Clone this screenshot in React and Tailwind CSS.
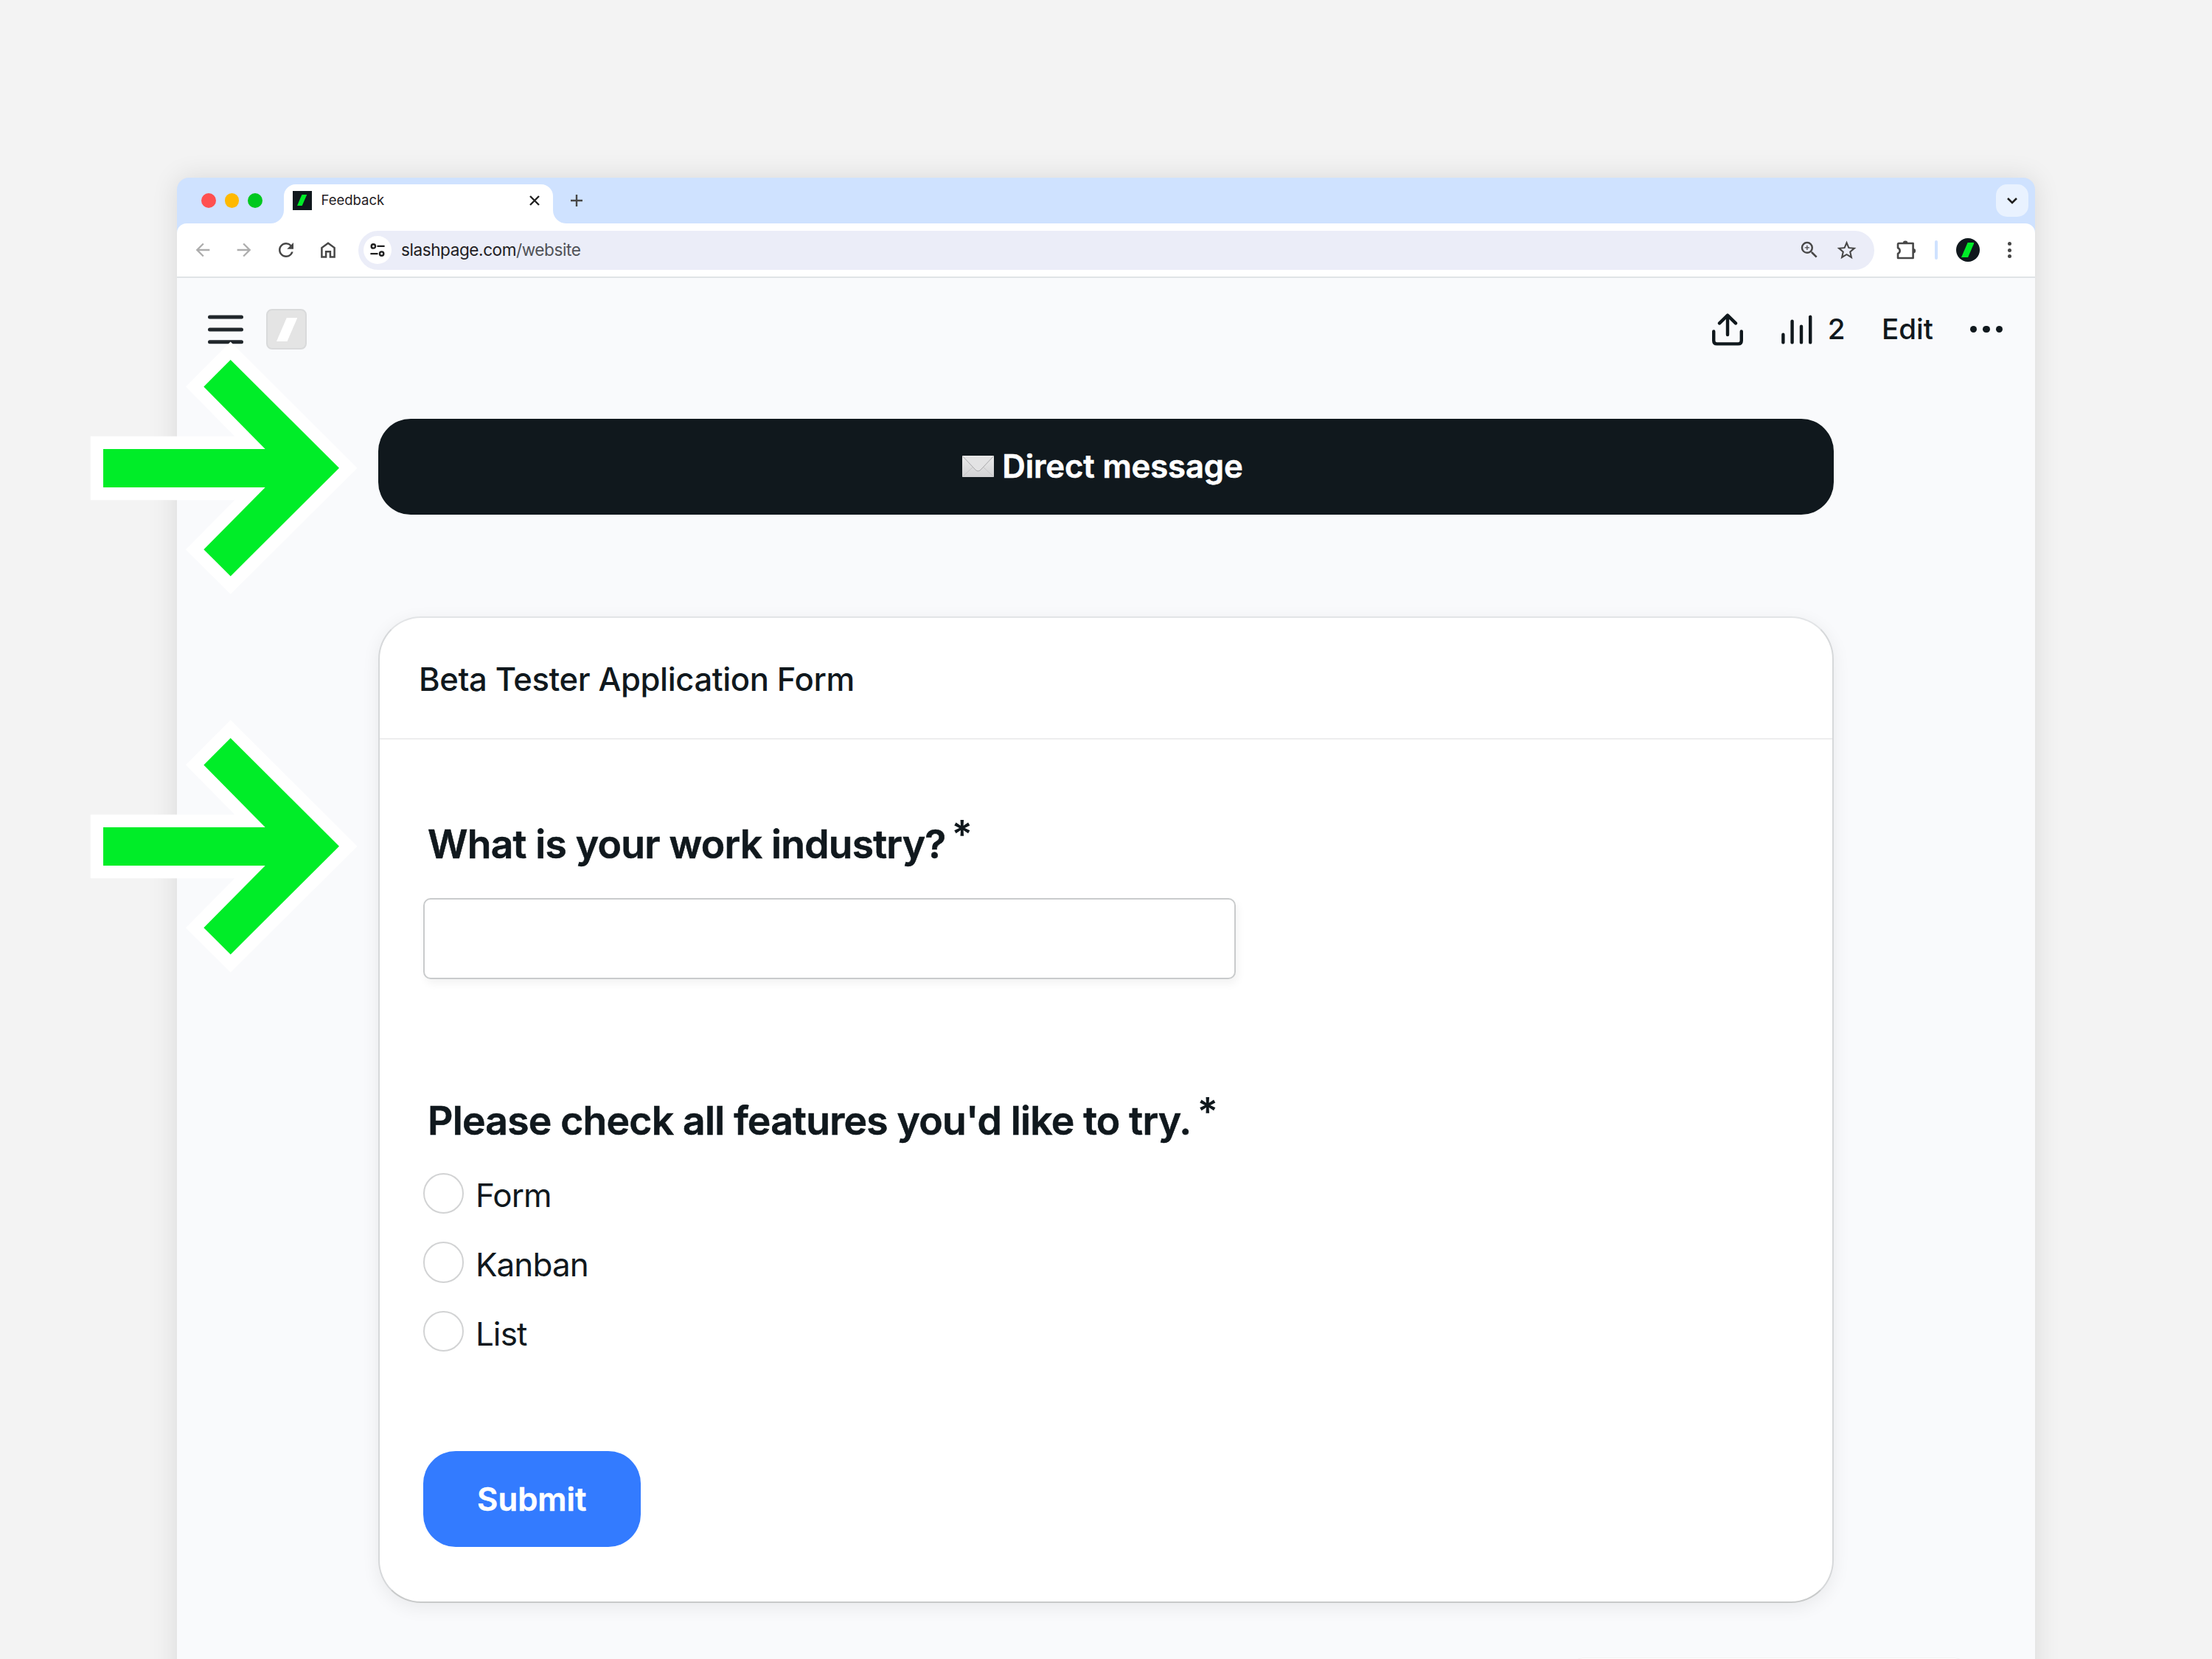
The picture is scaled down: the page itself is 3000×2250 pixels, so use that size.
import { MdArrowBack, MdArrowForward, MdRefresh, MdStarBorder, MdZoomIn } from "react-icons/md";

function Arrow({ className }) {
  return (
    <svg className={className} width="370" height="370" viewBox="115 450 370 370" fill="none">
      <path
        d="M140 609H359.7L276.3 524.4L312.7 488L460 634.8L312.7 781.4L276.3 745.2L359.7 661H140Z"
        fill="#00ed28"
        stroke="#fff"
        strokeWidth="34.6"
        strokeMiterlimit="10"
        paintOrder="stroke"
      />
    </svg>
  );
}

function Slash({ className, color }) {
  return (
    <svg className={className} viewBox="0 0 28 32">
      <path d="M13.8 0H28.3L14.5 32H0Z" fill={color} />
    </svg>
  );
}

function Tab() {
  return (
    <div className="flex h-[53.5px] items-end">
      <svg className="size-[18px]" viewBox="0 0 18 18">
        <path d="M18 0V18H0A18 18 0 0 0 18 0Z" fill="#fff" />
      </svg>
      <div className="flex h-full w-[365.5px] items-start rounded-t-[16px] bg-white pt-[8px] pr-[17px] pl-[12px]">
        <div className="flex h-[28px] w-full items-center">
          <div className="flex size-[26px] items-center justify-center bg-[#10181d]">
            <Slash className="h-[15px] w-[13px]" color="#00ed28" />
          </div>
          <span className="ml-[13px] text-[18.5px] leading-none text-[#1f2023]">Feedback</span>
          <svg className="ml-auto size-[16px]" viewBox="0 0 16 16" stroke="#222" strokeWidth="2.4">
            <path d="M2 2L14 14M14 2L2 14" />
          </svg>
        </div>
      </div>
      <svg className="size-[18px]" viewBox="0 0 18 18">
        <path d="M0 0V18H18A18 18 0 0 1 0 0Z" fill="#fff" />
      </svg>
    </div>
  );
}

function TabStrip() {
  return (
    <div className="flex h-[62px] items-end">
      <div className="flex h-[62px] items-center gap-[12px] pl-[33px]">
        <span className="size-[19.5px] rounded-full bg-[#ff5050]" />
        <span className="size-[19.5px] rounded-full bg-[#ffb900]" />
        <span className="size-[19.5px] rounded-full bg-[#00c81e]" />
      </div>
      <div className="ml-[11px]">
        <Tab />
      </div>
      <svg className="mb-[22.5px] ml-[5px] size-[18px]" viewBox="0 0 18 18" stroke="#474747" strokeWidth="2.4">
        <path d="M9 1V17M1 9H17" />
      </svg>
      <div className="mr-[9px] mb-[9.5px] ml-auto flex size-[44px] items-center justify-center rounded-[15px] bg-[#e9f2ff]">
        <svg className="size-[16px]" viewBox="0 0 16 16" fill="none" stroke="#1f1f1f" strokeWidth="2.6">
          <path d="M2 5L8 11L14 5" />
        </svg>
      </div>
    </div>
  );
}

function Toolbar() {
  return (
    <div className="flex h-[74px] items-center rounded-t-[13px] border-b-2 border-[#e0e3e6] bg-white pr-[32px] pl-[21px] text-[#474747]">
      <MdArrowBack className="size-[28px] text-[#adadad]" />
      <MdArrowForward className="ml-[28px] size-[28px] text-[#adadad]" />
      <MdRefresh className="ml-[28px] size-[30px]" />
      <svg className="ml-[31px] size-[22px]" viewBox="0 0 22 22" fill="none" stroke="currentColor" strokeWidth="2.5">
        <path d="M2.4 20.6V8.1L11 1.7L19.6 8.1V20.6H13.9V13.2H8.1V20.6Z" />
      </svg>
      <div className="ml-[30px] flex h-[53px] w-[2056px] items-center rounded-full bg-[#ebedf8] pr-[22px] pl-[7px]">
        <div className="flex size-[38px] items-center justify-center rounded-full bg-white">
          <svg className="size-[20px]" viewBox="0 0 20 20" fill="none" stroke="#1f1f1f" strokeWidth="2.4">
            <circle cx="4.4" cy="4.9" r="2.7" />
            <path d="M9.5 4.9H19.6M0.4 15.1H10.5" />
            <circle cx="15.6" cy="15.1" r="2.7" />
          </svg>
        </div>
        <span className="ml-[13px] text-[22.6px] leading-none tracking-[-0.45px] text-[#1f2023]">
          slashpage.com<span className="text-[#505257]">/website</span>
        </span>
        <MdZoomIn className="ml-auto size-[30px]" />
        <MdStarBorder className="ml-[20px] size-[31px]" />
      </div>
      <svg className="ml-[29.5px] size-[27px]" viewBox="0 0 27 27">
        <path
          d="M3.2 4H22.6V24H2V18A4.2 4.2 0 0 0 2 10.2V5.2Q2 4 3.2 4Z"
          fill="none"
          stroke="currentColor"
          strokeWidth="2.6"
          strokeLinejoin="round"
        />
        <path d="M8.8 3.8A3.3 3.3 0 0 1 15.4 3.8ZM22.8 11A3.3 3.3 0 0 1 22.8 17.6Z" fill="currentColor" />
      </svg>
      <span className="ml-[25.5px] h-[26px] w-[3.5px] rounded-full bg-[#cfe2ff]" />
      <div className="ml-[25px] flex size-[32px] items-center justify-center rounded-full bg-[#10181d]">
        <Slash className="h-[20px] w-[17.5px]" color="#00ed28" />
      </div>
      <div className="ml-auto flex flex-col gap-[3.7px]">
        <span className="size-[5px] rounded-full bg-current" />
        <span className="size-[5px] rounded-full bg-current" />
        <span className="size-[5px] rounded-full bg-current" />
      </div>
    </div>
  );
}

function PageHeader() {
  return (
    <div className="flex h-[139px] items-center pr-[44px] pl-[42px] text-[#10181d]">
      <svg className="h-[40px] w-[48px]" viewBox="0 0 48 40" stroke="#20262b" strokeWidth="5" strokeLinecap="round">
        <path d="M2.5 3H45.5M2.5 19.9H45.5M2.5 36.8H45.5" />
      </svg>
      <div className="ml-[31px] flex size-[55px] items-center justify-center rounded-[8px] border-2 border-[#d9dadb] bg-[#e4e4e4]">
        <Slash className="h-[32px] w-[28px]" color="#fff" />
      </div>
      <svg
        className="ml-auto h-[44px] w-[42px]"
        viewBox="0 0 42 44"
        fill="none"
        stroke="currentColor"
        strokeWidth="4.4"
        strokeLinecap="round"
        strokeLinejoin="round"
      >
        <path d="M2.2 24.5V37Q2.2 41.4 6.6 41.4H35.4Q39.8 41.4 39.8 37V24.5M21 29V2.6M10 13.4L21 2.6L32 13.4" />
      </svg>
      <svg className="ml-[52px] h-[40px] w-[42px]" viewBox="0 0 42 40" stroke="currentColor" strokeWidth="4.4" strokeLinecap="round">
        <path d="M2.4 26.8V37.4M14.6 8.6V37.4M27 15.6V37.4M39.2 2.6V37.4" />
      </svg>
      <span className="ml-[20.5px] text-[38.6px] leading-none font-medium">2</span>
      <span className="ml-[49.5px] text-[38.6px] leading-none font-medium">Edit</span>
      <div className="ml-[50px] flex gap-[7.8px]">
        <span className="size-[9.5px] rounded-full bg-current" />
        <span className="size-[9.5px] rounded-full bg-current" />
        <span className="size-[9.5px] rounded-full bg-current" />
      </div>
    </div>
  );
}

function Envelope() {
  return (
    <svg className="h-[29px] w-[43px]" viewBox="0 0 43 29">
      <defs>
        <linearGradient id="paper" x1="0" y1="0" x2="0" y2="1">
          <stop offset="0" stopColor="#ebebeb" />
          <stop offset="1" stopColor="#d2d2d4" />
        </linearGradient>
      </defs>
      <rect width="43" height="29" rx="0.8" fill="url(#paper)" />
      <path d="M0.5 28.5L15 15M42.5 28.5L28 15" stroke="#c2c2c4" strokeWidth="0.9" />
      <path d="M0.8 1L18 19.2Q21.5 22.6 25 19.2L42.2 1" fill="#e3e3e4" stroke="#a9a9ab" strokeWidth="1" />
    </svg>
  );
}

function Question({ children }) {
  return (
    <div className="ml-[65px] flex h-[64px] items-center leading-none font-semibold">
      <span className="text-[53.4px] tracking-[-0.75px] [-webkit-text-stroke:0.6px_currentColor]">{children}</span>
      <span className="relative -top-[12px] ml-[8px] text-[53px]">*</span>
    </div>
  );
}

function Option({ label }) {
  return (
    <div className="flex h-[55.4px] items-center">
      <span className="size-[55.4px] rounded-full border-[2.5px] border-[#d2d3d4] bg-white" />
      <span className="ml-[15.5px] pt-[6px] text-[44px] leading-none tracking-[-0.9px]">{label}</span>
    </div>
  );
}

function FormCard() {
  return (
    <div className="mt-[138.5px] h-[1338px] rounded-[58px] border-2 border-[#d6d8da] border-t-[#e2e4e6] border-b-[#c8caca] bg-white shadow-[0_6px_24px_rgba(0,0,0,0.07)]">
      <div className="flex h-[164.5px] items-center border-b-2 border-[#ededee] pt-[5px] pl-[53px]">
        <span className="text-[43.6px] leading-none font-medium tracking-[-0.4px]">Beta Tester Application Form</span>
      </div>
      <div className="pt-[110px]">
        <Question>What is your work industry?</Question>
        <div className="mt-[41px] ml-[59px] h-[110px] w-[1102px] rounded-[10px] border-2 border-[#c9cbcc] bg-white shadow-[3px_6px_12px_rgba(0,0,0,0.05)]" />
        <div className="mt-[160.5px]">
          <Question>Please check all features you'd like to try.</Question>
        </div>
        <div className="mt-[38.5px] ml-[59px] flex flex-col gap-[38.4px]">
          <Option label="Form" />
          <Option label="Kanban" />
          <Option label="List" />
        </div>
        <button className="mt-[134.5px] ml-[59px] flex h-[130px] w-[294.5px] items-center justify-center rounded-[44px] bg-[#337bff] pt-[2px] text-white">
          <span className="text-[43.6px] leading-none font-semibold [-webkit-text-stroke:0.5px_currentColor]">Submit</span>
        </button>
      </div>
    </div>
  );
}

export default function App() {
  return (
    <div className="relative h-[2250px] w-[3000px] overflow-hidden bg-[#f3f3f3] pt-[241px] font-['Inter','Liberation_Sans',sans-serif] text-[#10181d]">
      <div className="mx-auto h-[2100px] w-[2520px] overflow-hidden rounded-t-[16px] bg-[#cfe2ff] shadow-[0_0_36px_rgba(0,0,0,0.11)]">
        <TabStrip />
        <Toolbar />
        <div className="h-[2000px] bg-[#f9fafc]">
          <PageHeader />
          <div className="mx-auto mt-[51.5px] w-[1974px]">
            <div className="flex h-[130px] items-center justify-center rounded-[44px] bg-[#10181d] pr-[9px]">
              <Envelope />
              <span className="ml-[11px] text-[43.6px] leading-none font-semibold tracking-[-0.1px] text-white [-webkit-text-stroke:0.6px_currentColor]">
                Direct message
              </span>
            </div>
            <FormCard />
            <div className="mt-[74px] mr-[-180px] ml-auto h-[80px] w-[536px] rounded-[16px] border border-[#f3f3f4] bg-white" />
          </div>
        </div>
      </div>
      <Arrow className="absolute top-[450px] left-[115px]" />
      <Arrow className="absolute top-[963px] left-[115px]" />
    </div>
  );
}
